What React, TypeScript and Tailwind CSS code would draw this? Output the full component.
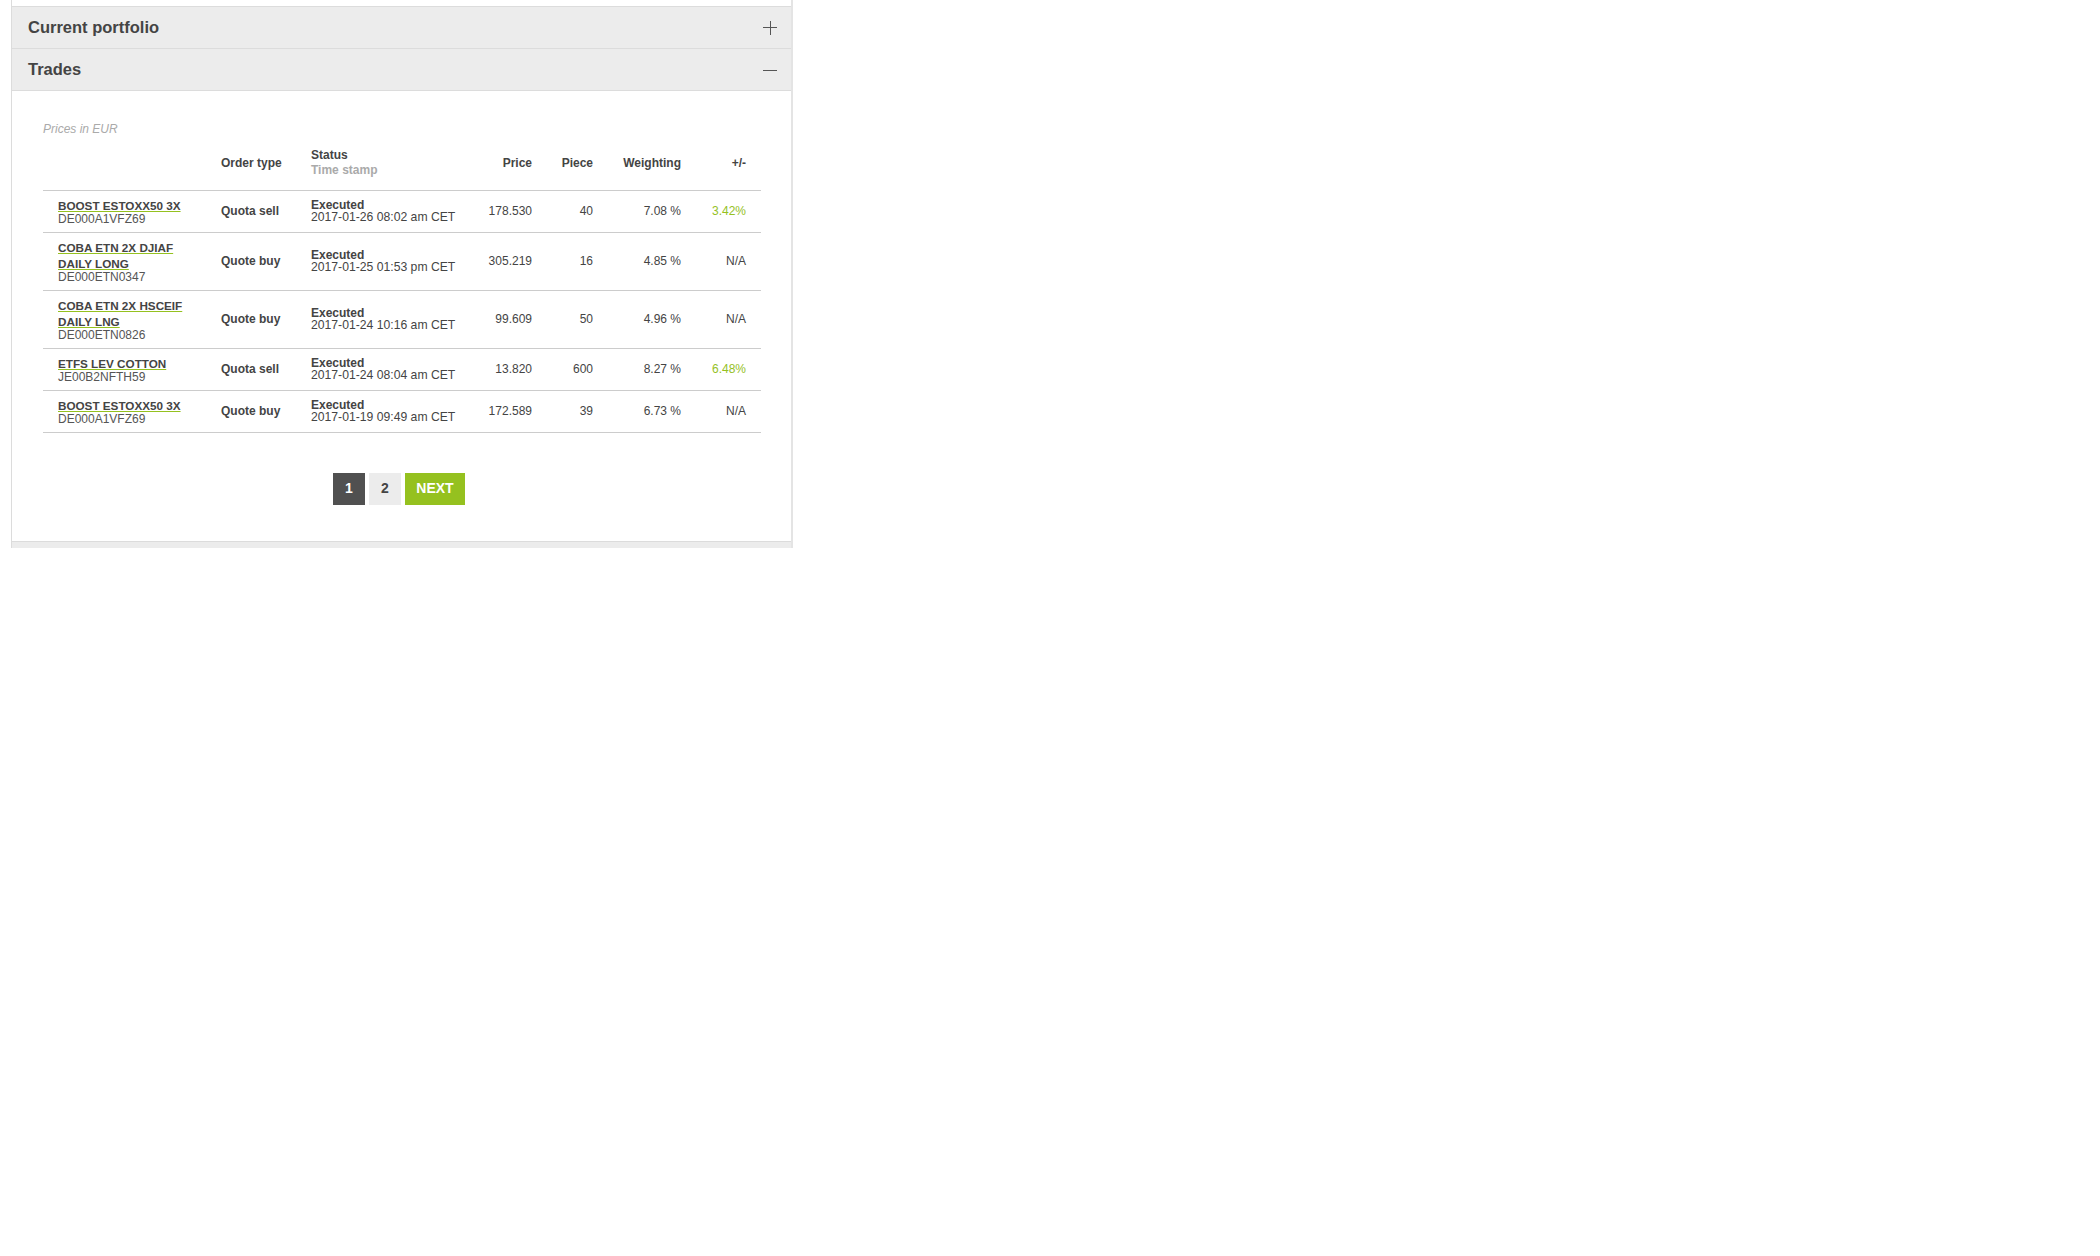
import React from "react";

type Row = {
  name: string[];
  isin: string;
  order: string;
  ts: string;
  price: string;
  piece: string;
  weight: string;
  change: string;
  positive: boolean;
};

const rows: Row[] = [
  { name: ["BOOST ESTOXX50 3X"], isin: "DE000A1VFZ69", order: "Quota sell", ts: "2017-01-26 08:02 am CET", price: "178.530", piece: "40", weight: "7.08 %", change: "3.42%", positive: true },
  { name: ["COBA ETN 2X DJIAF", "DAILY LONG"], isin: "DE000ETN0347", order: "Quote buy", ts: "2017-01-25 01:53 pm CET", price: "305.219", piece: "16", weight: "4.85 %", change: "N/A", positive: false },
  { name: ["COBA ETN 2X HSCEIF", "DAILY LNG"], isin: "DE000ETN0826", order: "Quote buy", ts: "2017-01-24 10:16 am CET", price: "99.609", piece: "50", weight: "4.96 %", change: "N/A", positive: false },
  { name: ["ETFS LEV COTTON"], isin: "JE00B2NFTH59", order: "Quota sell", ts: "2017-01-24 08:04 am CET", price: "13.820", piece: "600", weight: "8.27 %", change: "6.48%", positive: true },
  { name: ["BOOST ESTOXX50 3X"], isin: "DE000A1VFZ69", order: "Quote buy", ts: "2017-01-19 09:49 am CET", price: "172.589", piece: "39", weight: "6.73 %", change: "N/A", positive: false },
];

function PlusIcon() {
  return (
    <svg width="14" height="14" viewBox="0 0 14 14" className="block">
      <line x1="0" y1="6.5" x2="14" y2="6.5" stroke="#555" strokeWidth="1" />
      <line x1="7.5" y1="0" x2="7.5" y2="14" stroke="#555" strokeWidth="1" />
    </svg>
  );
}

function MinusIcon() {
  return (
    <svg width="14" height="14" viewBox="0 0 14 14" className="block">
      <line x1="0" y1="7.5" x2="14" y2="7.5" stroke="#555" strokeWidth="1" />
    </svg>
  );
}

export default function App() {
  return (
    <div className="min-h-[1256px] bg-white" style={{ fontFamily: '"Liberation Sans", Arial, sans-serif' }}>
      <div className="ml-[11px] w-[782px] border-l border-l-[#dcdcdc] border-r-2 border-r-[#e4e4e4] text-[#444]">
        <div className="h-[6px] bg-white" />
        <div className="h-[42px] border-t border-[#dcdcdc] bg-[#ececec] flex items-center justify-between pl-[16px] pr-[14px]">
          <span className="text-[16.5px] font-bold">Current portfolio</span>
          <PlusIcon />
        </div>
        <div className="h-[42px] border-t border-[#dcdcdc] bg-[#ececec] flex items-center justify-between pl-[16px] pr-[14px]">
          <span className="text-[16.5px] font-bold">Trades</span>
          <MinusIcon />
        </div>
        <div className="border-t border-[#dcdcdc] bg-white pl-[31px] pr-[30px] pt-[31px] pb-[36px]">
          <div className="text-[12px] leading-[15px] italic text-[#aaa]">Prices in EUR</div>
          <table className="table-fixed border-collapse w-[718px] text-[12px]">
            <colgroup>
              <col className="w-[178px]" />
              <col className="w-[90px]" />
              <col className="w-[161px]" />
              <col className="w-[60px]" />
              <col className="w-[61px]" />
              <col className="w-[88px]" />
              <col className="w-[80px]" />
            </colgroup>
            <thead>
              <tr className="h-[53px] border-b border-[#ccc] font-bold">
                <th />
                <th className="text-left align-middle font-bold">Order type</th>
                <th className="text-left align-middle font-bold leading-[15px]">
                  <div>Status</div>
                  <div className="text-[#aaa]">Time stamp</div>
                </th>
                <th className="text-right align-middle font-bold">Price</th>
                <th className="text-right align-middle font-bold">Piece</th>
                <th className="text-right align-middle font-bold">Weighting</th>
                <th className="text-right align-middle font-bold pr-[15px]">+/-</th>
              </tr>
            </thead>
            <tbody>
              {rows.map((r, i) => (
                <tr key={i} className="border-b border-[#ccc]">
                  <td className="pl-[15px] pr-[23px] pt-[7px] pb-[8px] align-middle">
                    <div className="leading-[16px] font-bold text-[11.7px]">
                      {r.name.map((n, j) => (
                        <React.Fragment key={j}>
                          <span className="underline decoration-[#95c11f] decoration-1 underline-offset-[1px]">{n}</span>
                          {j < r.name.length - 1 ? <br /> : null}
                        </React.Fragment>
                      ))}
                    </div>
                    <div className="leading-[10px] text-[#555]">{r.isin}</div>
                  </td>
                  <td className="align-middle font-bold">{r.order}</td>
                  <td className="align-middle leading-[12px]">
                    <div className="font-bold">Executed</div>
                    <div className="text-[12.2px]">{r.ts}</div>
                  </td>
                  <td className="align-middle text-right">{r.price}</td>
                  <td className="align-middle text-right">{r.piece}</td>
                  <td className="align-middle text-right">{r.weight}</td>
                  <td className={"align-middle text-right pr-[15px] " + (r.positive ? "text-[#95c11f]" : "text-[#444]")}>{r.change}</td>
                </tr>
              ))}
            </tbody>
          </table>
          <div className="mt-[40px] flex justify-center gap-[4px] w-[718px] pr-[6px]">
            <div className="w-[32px] h-[32px] bg-[#505050] text-white text-[14px] font-bold flex items-center justify-center">1</div>
            <div className="w-[32px] h-[32px] bg-[#ececec] text-[#444] text-[14px] font-bold flex items-center justify-center">2</div>
            <div className="w-[60px] h-[32px] bg-[#95c11f] text-white text-[14px] font-bold flex items-center justify-center">NEXT</div>
          </div>
        </div>
        <div className="h-[6px] border-t border-[#dcdcdc] bg-[#ececec] box-content" />
      </div>
    </div>
  );
}
